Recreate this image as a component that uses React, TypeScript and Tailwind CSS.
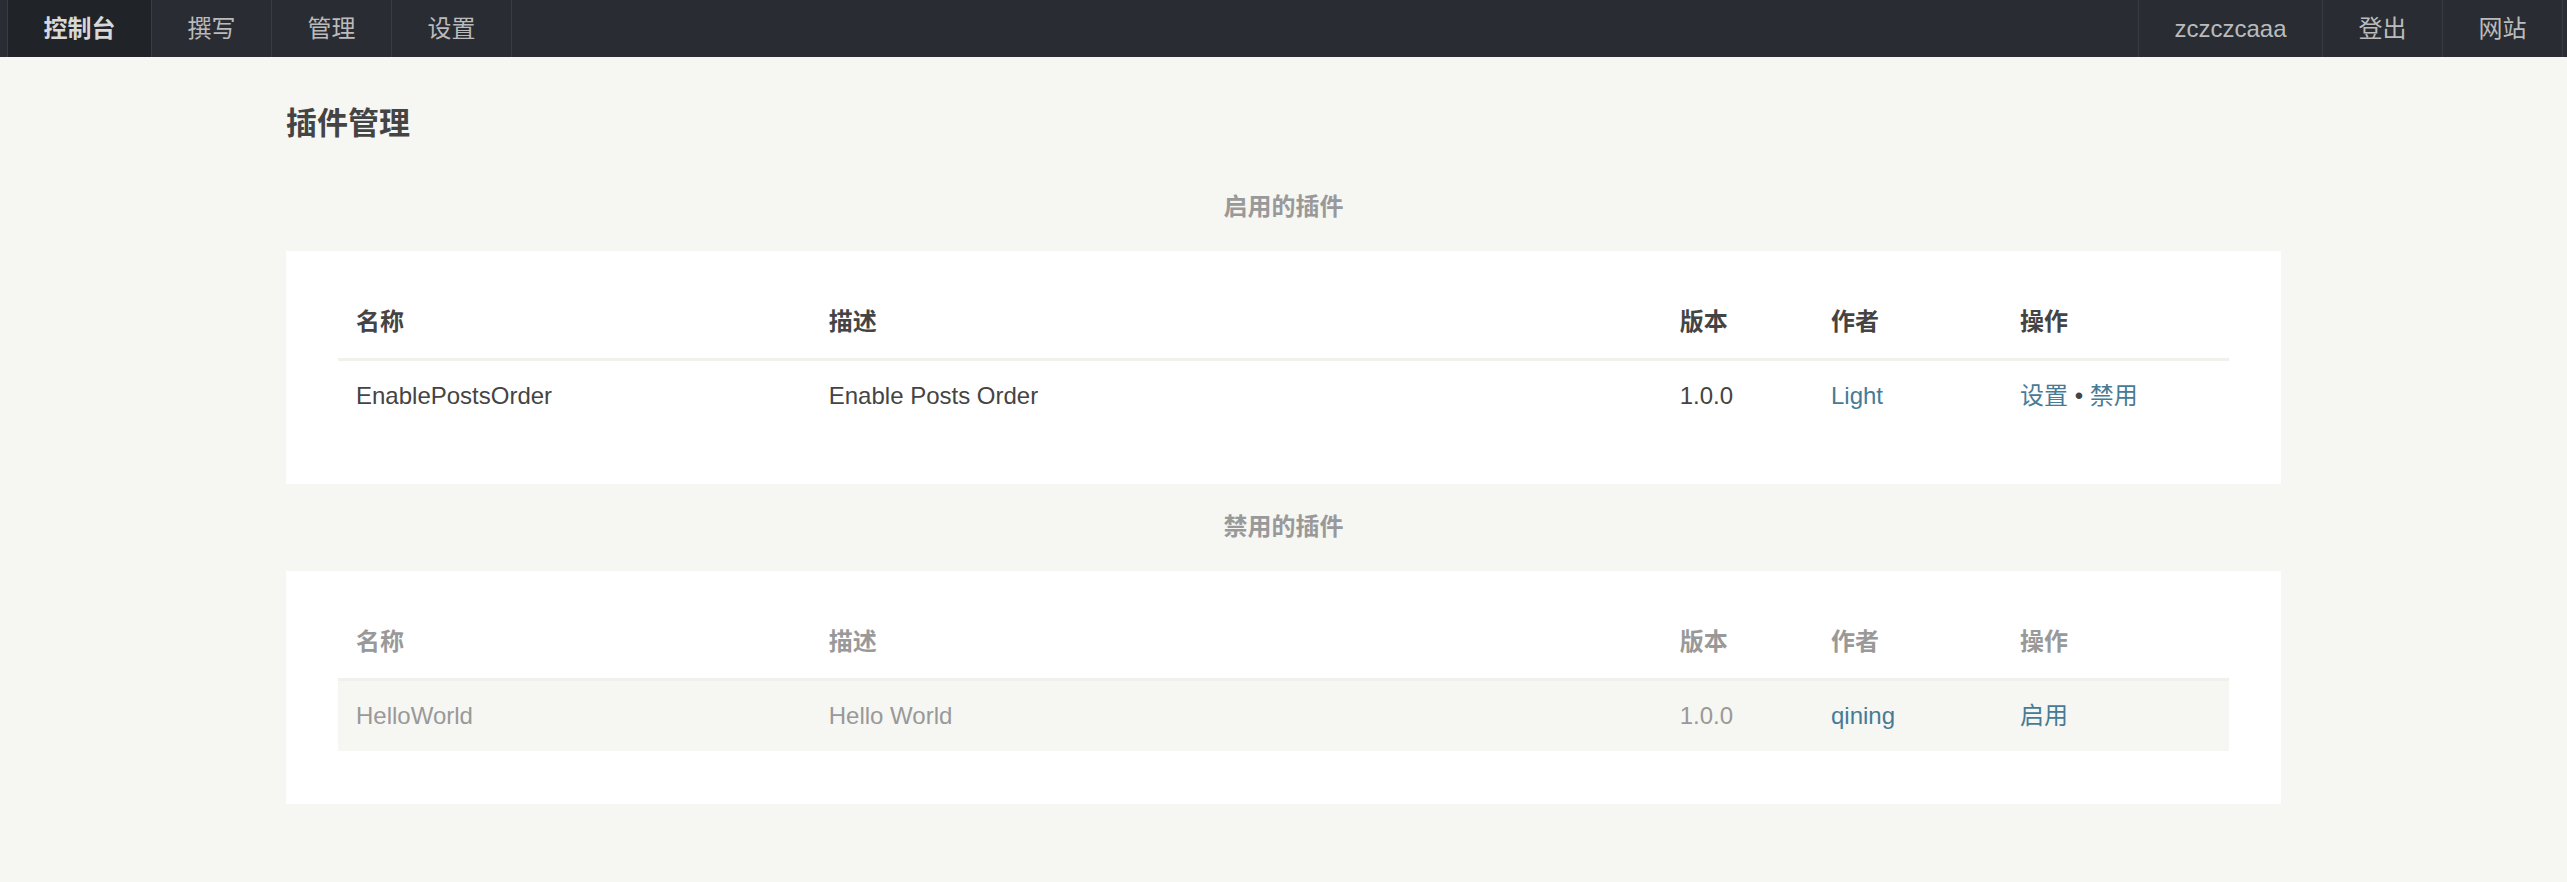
import type { ReactNode } from "react";

type Plugin = {
  name: string;
  description: string;
  version: string;
  author: string;
};

const ACTIVE: Plugin[] = [
  { name: "EnablePostsOrder", description: "Enable Posts Order", version: "1.0.0", author: "Light" },
];

const INACTIVE: Plugin[] = [
  { name: "HelloWorld", description: "Hello World", version: "1.0.0", author: "qining" },
];

const FONT = "font-['Liberation_Sans','Noto_Sans_CJK_SC',sans-serif]";

function NavItem({ children, focus = false, first = false }: { children: ReactNode; focus?: boolean; first?: boolean }) {
  return (
    <a
      className={`flex h-full items-center border-r border-[#383d45] px-[35.5px] ${first ? "border-l" : ""} ${
        focus ? "bg-[#202328] font-bold text-[#d8d8d8]" : "text-[#bbb]"
      }`}
    >
      {children}
    </a>
  );
}

function Nav() {
  return (
    <nav className="flex h-[57px] items-stretch justify-between bg-[#292d33] pl-[7px] pr-[4px] text-[24px]">
      <div className="flex">
        <NavItem focus first>
          控制台
        </NavItem>
        <NavItem>撰写</NavItem>
        <NavItem>管理</NavItem>
        <NavItem>设置</NavItem>
      </div>
      <div className="flex">
        <NavItem first>zczczcaaa</NavItem>
        <NavItem>登出</NavItem>
        <NavItem>网站</NavItem>
      </div>
    </nav>
  );
}

function PluginTable({ plugins, enabled }: { plugins: Plugin[]; enabled: boolean }) {
  const th = `pb-[17px] pl-[18px] pr-2 text-left font-bold leading-[38px] border-b-[3px] border-[#f0f0ec] ${
    enabled ? "text-[#444]" : "text-[#999]"
  }`;
  const td = `py-[17px] pl-[18px] pr-2 leading-[36px] ${enabled ? "text-[#444]" : "text-[#999]"}`;
  return (
    <div className="bg-white px-[52px] pt-[52px] pb-[53px]">
      <table className="w-full table-fixed border-collapse">
        <colgroup>
          <col className="w-[25%]" />
          <col className="w-[45%]" />
          <col className="w-[8%]" />
          <col className="w-[10%]" />
          <col className="w-[12%]" />
        </colgroup>
        <thead>
          <tr>
            <th className={th}>名称</th>
            <th className={th}>描述</th>
            <th className={th}>版本</th>
            <th className={th}>作者</th>
            <th className={th}>操作</th>
          </tr>
        </thead>
        <tbody>
          {plugins.map((p) => (
            <tr key={p.name} className={enabled ? "" : "bg-[#f6f6f3]"}>
              <td className={td}>{p.name}</td>
              <td className={td}>{p.description}</td>
              <td className={td}>{p.version}</td>
              <td className={td}>
                <a className="text-[#467b96]">{p.author}</a>
              </td>
              <td className={td}>
                {enabled ? (
                  <>
                    <a className="text-[#467b96]">设置</a>
                    <span className="text-[#444]"> • </span>
                    <a className="text-[#467b96]">禁用</a>
                  </>
                ) : (
                  <a className="text-[#467b96]">启用</a>
                )}
              </td>
            </tr>
          ))}
        </tbody>
      </table>
    </div>
  );
}

export default function App() {
  return (
    <div className={`min-h-[882px] bg-[#f6f6f3] text-[24px] text-[#444] ${FONT}`}>
      <Nav />
      <main className="mx-auto w-[1995px] pt-[47px]">
        <h2 className="mb-[45px] text-[31px] font-bold leading-[40px] text-[#444]">插件管理</h2>
        <h4 className="mb-[26px] text-center font-bold leading-[36px] text-[#999]">启用的插件</h4>
        <PluginTable plugins={ACTIVE} enabled />
        <h4 className="mt-[25px] mb-[26px] text-center font-bold leading-[36px] text-[#999]">禁用的插件</h4>
        <PluginTable plugins={INACTIVE} enabled={false} />
      </main>
    </div>
  );
}
